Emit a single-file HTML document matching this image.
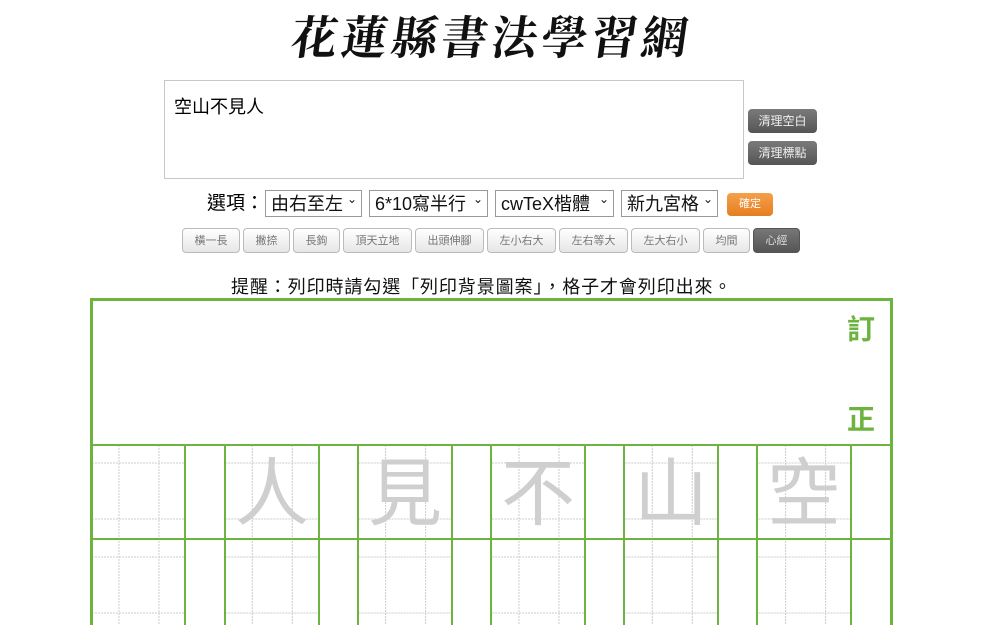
<!DOCTYPE html>
<html><head><meta charset="utf-8"><style>
body{margin:0;width:1000px;height:625px;overflow:hidden;background:#fff;font-family:"Liberation Sans","Noto Sans CJK TC",sans-serif;position:relative}
.a{position:absolute}
.title{left:282px;top:2px;width:420px;text-align:center;font-family:"Noto Serif CJK SC",serif;font-weight:700;font-size:46px;letter-spacing:4px;color:#111;transform:skewX(-8deg)}
.ta{left:164px;top:80px;width:580px;height:99px;border:1px solid #c8c8c8;font-size:18px;padding:12px 9px;box-sizing:border-box}
.gb{background:linear-gradient(#7a7a7a,#555);color:#eee;font-size:12px;border-radius:4px;text-align:center;line-height:24px;width:69px;height:24px}
.sel{border:1px solid #999;height:27px;top:190px;font-size:18px;line-height:27px;padding-left:5px;box-sizing:border-box;color:#111}
.sel:after{content:"⌄";position:absolute;right:4px;top:-5px;font-size:12px}
.b{top:228px;height:25px;border:1px solid #bbb;border-radius:4px;background:linear-gradient(#fff,#e6e6e6);font-size:11px;color:#777;text-align:center;line-height:24px;box-sizing:border-box}
</style></head><body>
<div class="a title">花蓮縣書法學習網</div>
<div class="a ta">空山不見人</div>
<div class="a gb" style="left:748px;top:109px">清理空白</div>
<div class="a gb" style="left:748px;top:141px">清理標點</div>
<div class="a" style="left:207px;top:190px;font-size:19px;line-height:27px">選項：</div>
<div class="a sel" style="left:265px;width:97px">由右至左</div>
<div class="a sel" style="left:369px;width:119px">6*10寫半行</div>
<div class="a sel" style="left:495px;width:119px">cwTeX楷體</div>
<div class="a sel" style="left:621px;width:97px">新九宮格</div>
<div class="a" style="left:727px;top:193px;width:46px;height:23px;border-radius:4px;background:linear-gradient(#f5a04a,#e57f20);color:#fff;font-size:11px;text-align:center;line-height:23px">確定</div>
<div class="a b" style="left:182px;width:58px">橫一長</div>
<div class="a b" style="left:243px;width:47px">撇捺</div>
<div class="a b" style="left:293px;width:47px">長鉤</div>
<div class="a b" style="left:343px;width:69px">頂天立地</div>
<div class="a b" style="left:415px;width:69px">出頭伸腳</div>
<div class="a b" style="left:487px;width:69px">左小右大</div>
<div class="a b" style="left:559px;width:69px">左右等大</div>
<div class="a b" style="left:631px;width:69px">左大右小</div>
<div class="a b" style="left:703px;width:47px">均間</div>
<div class="a b" style="left:753px;width:47px;background:linear-gradient(#777,#555);color:#ddd;border-color:#555">心經</div>
<div class="a" style="left:231px;width:520px;top:273px;font-size:18px;letter-spacing:0.9px;color:#111;white-space:nowrap">提醒：列印時請勾選「列印背景圖案」，格子才會列印出來。</div>
<svg class="a" style="left:0;top:0" width="1000" height="625">
<g stroke="#ccc" stroke-width="1" stroke-dasharray="2,1">
<g id="d">
<line x1="119" y1="445" x2="119" y2="625"/><line x1="159" y1="445" x2="159" y2="625"/>
<line x1="92" y1="463" x2="185" y2="463"/><line x1="92" y1="519" x2="185" y2="519"/>
<line x1="92" y1="557" x2="185" y2="557"/><line x1="92" y1="613" x2="185" y2="613"/>
</g>
<use href="#d" x="133.3"/><use href="#d" x="266.6"/><use href="#d" x="400"/><use href="#d" x="533.3"/><use href="#d" x="666.6"/>
</g>
<g stroke="#6db33f" fill="none">
<rect x="91.5" y="299.5" width="800" height="340" stroke-width="3"/>
<line x1="91" y1="445" x2="892" y2="445" stroke-width="2"/>
<line x1="91" y1="539" x2="892" y2="539" stroke-width="2"/>
<g stroke-width="2">
<line x1="185" y1="445" x2="185" y2="625"/><line x1="225" y1="445" x2="225" y2="625"/>
<line x1="319" y1="445" x2="319" y2="625"/><line x1="358" y1="445" x2="358" y2="625"/>
<line x1="452" y1="445" x2="452" y2="625"/><line x1="491" y1="445" x2="491" y2="625"/>
<line x1="585" y1="445" x2="585" y2="625"/><line x1="624" y1="445" x2="624" y2="625"/>
<line x1="718" y1="445" x2="718" y2="625"/><line x1="757" y1="445" x2="757" y2="625"/>
<line x1="851" y1="445" x2="851" y2="625"/>
</g></g>
<g font-family="Noto Sans CJK TC,sans-serif" font-size="74" fill="#cfcfcf" text-anchor="middle">
<text x="272" y="519">人</text><text x="405" y="519">見</text><text x="538" y="519">不</text><text x="671" y="519">山</text><text x="804" y="519">空</text>
</g>
<g font-family="Noto Sans CJK TC,sans-serif" font-size="28" font-weight="bold" fill="#6db33f" text-anchor="middle">
<text x="861" y="339">訂</text><text x="861" y="429">正</text>
</g>
</svg>
</body></html>
